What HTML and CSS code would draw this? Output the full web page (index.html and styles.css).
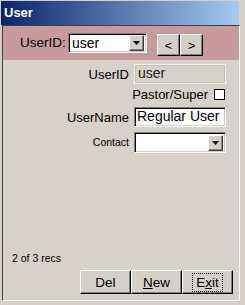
FILE: index.html
```html
<!DOCTYPE html>
<html lang="en">
<head>
    <meta charset="UTF-8">
    <title>User</title>
    <link rel="stylesheet" href="styles.css">
</head>
<body>
    <div class="window">
        <div class="titlebar">User</div>
        <div class="frame">
            <div class="header">
                <label class="head-label">UserID:</label>
                <div class="combo head-combo">
                    <span class="combo-text">user</span>
                    <span class="drop-btn"><svg width="7" height="4" viewBox="0 0 7 4"><polygon points="0,0 7,0 3.5,4" fill="#000"/></svg></span>
                </div>
                <div class="nav">
                    <button class="btn nav-btn">&lt;</button>
                    <button class="btn nav-btn">&gt;</button>
                </div>
            </div>
            <div class="content">
                <div class="fields">
                    <label class="field-label">UserID</label>
                    <div class="textbox disabled">user</div>

                    <div class="check-row">
                        <label class="field-label">Pastor/Super</label>
                        <span class="checkbox"></span>
                    </div>

                    <label class="field-label row3">UserName</label>
                    <div class="textbox sunken row3">Regular User</div>

                    <label class="field-label small row4">Contact</label>
                    <div class="combo row4">
                        <span class="combo-text"></span>
                        <span class="drop-btn"><svg width="7" height="4" viewBox="0 0 7 4"><polygon points="0,0 7,0 3.5,4" fill="#000"/></svg></span>
                    </div>
                </div>
                <div class="footer">
                    <div class="status">2 of 3 recs</div>
                    <div class="actions">
                        <button class="btn action">Del</button>
                        <button class="btn action"><u>N</u>ew</button>
                        <button class="btn action"><span class="focus">E<u>x</u>it</span></button>
                    </div>
                </div>
            </div>
        </div>
    </div>
</body>
</html>
```

FILE: styles.css
```css
body {
    margin: 0;
    font-family: "Liberation Sans", Arial, sans-serif;
    background-color: #d4d0c8;
}
.window {
    width: 245px;
    height: 305px;
    padding-top: 1px;
    box-sizing: border-box;
    background-color: #d4d0c8;
}
.titlebar {
    height: 24px;
    margin: 0 6px 0 1px;
    padding-left: 3px;
    line-height: 24px;
    color: #fff;
    font-weight: bold;
    font-size: 13px;
    background: linear-gradient(to right, #0a246a, #a6caf0);
}
.frame {
    width: 238px;
    height: 276px;
    margin-left: 2px;
    box-sizing: border-box;
    border: 1px solid;
    border-color: #404040 #fff #fff #404040;
    display: flex;
    flex-direction: column;
    background-color: #d6d1c9;
}
.header {
    height: 34px;
    display: flex;
    align-items: flex-start;
    padding-left: 17px;
    background-color: #c89a9b;
}
.head-label {
    width: 48px;
    margin-top: 9px;
    font-size: 13.5px;
    line-height: 15px;
    color: #000;
}
.combo {
    position: relative;
    height: 20px;
    box-sizing: border-box;
    border: 1px solid;
    border-color: #808080 #fff #fff #808080;
    box-shadow: inset 1px 1px 0 #000, inset -1px -1px 0 #d4d0c8;
    background-color: #fff;
    display: flex;
    align-items: center;
}
.head-combo {
    width: 79px;
    margin-top: 7px;
}
.combo-text {
    flex: 1;
    padding-left: 3px;
    font-size: 14px;
    line-height: 16px;
}
.drop-btn {
    width: 15px;
    height: 16px;
    margin-right: 2px;
    box-sizing: border-box;
    border: 1px solid;
    border-color: #fff #404040 #404040 #fff;
    box-shadow: inset -1px -1px 0 #808080;
    background-color: #d4d0c8;
    display: flex;
    align-items: center;
    justify-content: center;
}
.nav {
    display: flex;
    margin-left: 10px;
    margin-top: 8px;
}
.btn {
    padding: 0;
    font-family: inherit;
    color: #000;
    background-color: #d4d0c8;
    border: 1px solid;
    border-color: #fff #000 #000 #fff;
    box-shadow: inset -1px -1px 0 #808080;
    box-sizing: border-box;
}
.nav-btn {
    width: 23px;
    height: 22px;
    font-size: 13px;
}
.content {
    flex: 1;
    display: flex;
    flex-direction: column;
}
.fields {
    display: grid;
    grid-template-columns: 126px 92px;
    column-gap: 5px;
    padding-top: 4px;
}
.field-label {
    text-align: right;
    font-size: 13px;
    line-height: 15px;
    align-self: center;
    color: #000;
}
.field-label.small {
    font-size: 10.5px;
}
.textbox {
    height: 20px;
    box-sizing: border-box;
    padding-left: 2px;
    font-size: 14px;
    line-height: 17px;
}
.disabled {
    color: #222;
    border: 1px solid #f4f2ee;
    box-shadow: inset 0 0 0 1px #c4c0b8;
    padding-left: 3px;
}
.sunken {
    background-color: #fff;
    border: 1px solid;
    border-color: #808080 #fff #fff #808080;
    box-shadow: inset 1px 1px 0 #000, inset -1px -1px 0 #d4d0c8;
}
.check-row {
    grid-column: 1 / 3;
    display: flex;
    justify-content: flex-end;
    align-items: center;
    gap: 6px;
    height: 15px;
    margin-top: 3px;
    padding-right: 1px;
}
.checkbox {
    width: 11px;
    height: 11px;
    box-sizing: border-box;
    border: 1px solid #000;
    background-color: #fff;
}
.row3 {
    margin-top: 5px;
}
.row4 {
    margin-top: 5px;
}
.combo.row4 {
    height: 21px;
}
.footer {
    margin-top: auto;
    padding-bottom: 6px;
}
.status {
    padding-left: 9px;
    font-size: 10.5px;
    line-height: 12px;
}
.actions {
    display: flex;
    justify-content: flex-end;
    margin-top: 6px;
    padding-right: 6px;
}
.action {
    width: 51px;
    height: 24px;
    font-size: 13.5px;
}
.focus {
    outline: 1px dotted #000;
    outline-offset: 1px;
    padding: 0 2px;
}
```
